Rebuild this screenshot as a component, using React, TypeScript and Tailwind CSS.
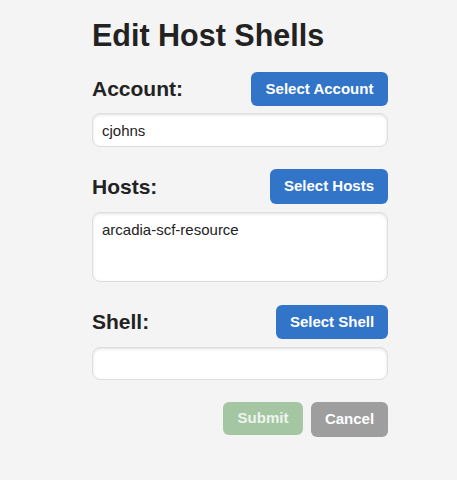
import React from "react";

export default function App() {
  const font = { fontFamily: '"Liberation Sans", Arial, sans-serif' };
  const inputCls =
    "w-full bg-white rounded-lg border border-[#dedede] shadow-[inset_0_1px_3px_rgba(0,0,0,0.13)] px-[9px] text-[15px] text-[#222] outline-none";
  const blueBtn =
    "h-[34px] rounded-md bg-[#3274c8] text-white text-[15px] font-bold flex items-center justify-center";
  const label = "text-[21px] leading-[28px] font-bold text-[#222]";
  return (
    <div className="w-[457px] h-[480px] bg-[#f4f4f4]" style={font}>
      <div className="ml-[92px] w-[296px] pt-[15px]">
        <h1 className="text-[30.5px] leading-[40px] font-bold text-[#222]">Edit Host Shells</h1>

        <div className="mt-[17px] flex items-center justify-between">
          <span className={label}>Account:</span>
          <button className={`${blueBtn} w-[137px]`}>Select Account</button>
        </div>
        <input className={`${inputCls} mt-[7px] h-[34px]`} defaultValue="cjohns" />

        <div className="mt-[22px] flex items-center justify-between">
          <span className={label}>Hosts:</span>
          <button className={`${blueBtn} w-[118px] h-[35px]`}>Select Hosts</button>
        </div>
        <textarea
          className={`${inputCls} mt-[8px] h-[70px] py-[6px] resize-none block`}
          defaultValue="arcadia-scf-resource"
        />

        <div className="mt-[23px] flex items-center justify-between">
          <span className={label}>Shell:</span>
          <button className={`${blueBtn} w-[112px]`}>Select Shell</button>
        </div>
        <input className={`${inputCls} mt-[8px] h-[33px]`} defaultValue="" />

        <div className="mt-[22px] flex justify-end gap-[8px]">
          <button className="h-[33px] w-[80px] rounded-md bg-[#a5c6a2] text-[#eef4ee] text-[15px] font-bold">
            Submit
          </button>
          <button className="h-[35px] w-[77px] rounded-md bg-[#9e9e9e] text-white text-[15px] font-bold">
            Cancel
          </button>
        </div>
      </div>
    </div>
  );
}
